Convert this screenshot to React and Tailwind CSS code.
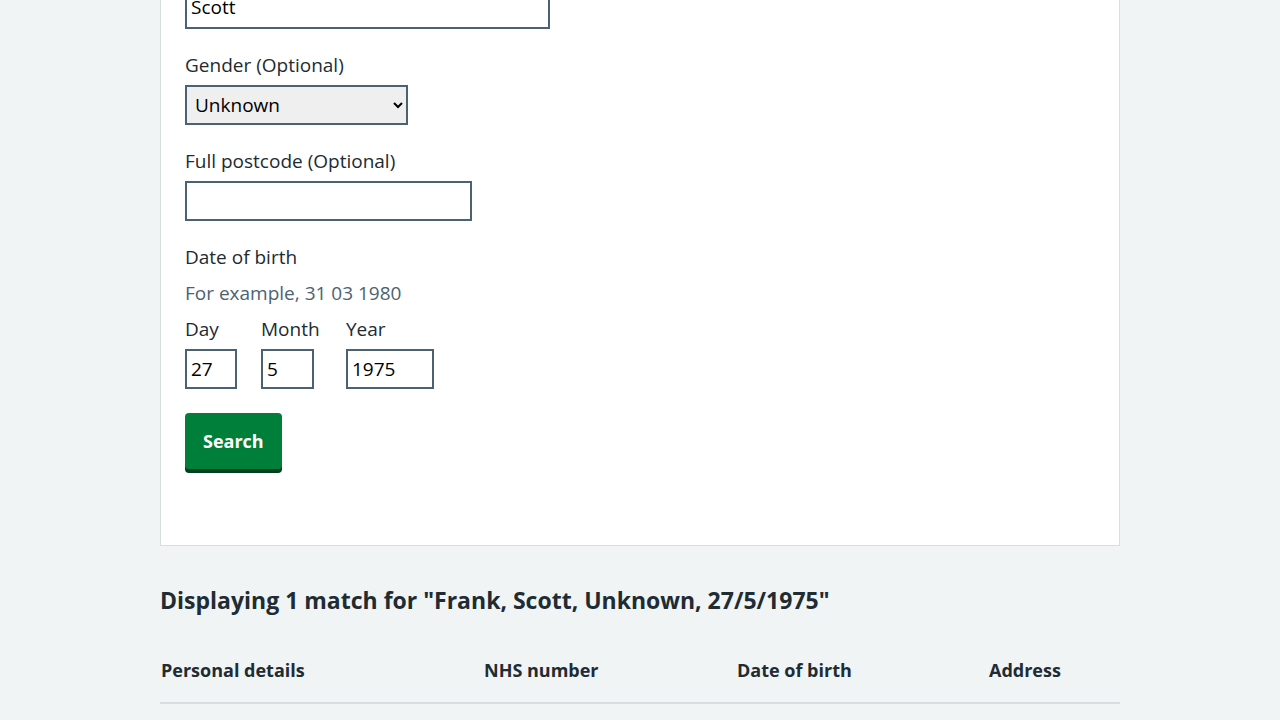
import React from 'react';

const labelCls = 'block text-[19px] leading-7 text-[#212b32]';
const inputCls =
  'block h-10 border-2 border-[#4c6272] bg-white px-1 text-[19px] text-black outline-none';

function DateItem({ label, value, width, minWidth = '' }) {
  return (
    <div className={'mr-6 flex flex-col ' + minWidth}>
      <label className={labelCls + ' mb-1.5'}>{label}</label>
      <input className={inputCls + ' ' + width} defaultValue={value} />
    </div>
  );
}

export default function App() {
  return (
    <div
      className="min-h-[720px] overflow-hidden bg-[#f0f4f5] text-[#212b32]"
      style={{ fontFamily: '"Open Sans", "Noto Sans", sans-serif' }}
    >
      <div className="mx-auto w-[960px]">
        {/* search form card, scrolled so the surname field is cut off at the top */}
        <div className="-mt-[70px] border border-[#d8dde0] bg-white px-6 pt-6 pb-[76px]">
          <div className="mb-[22px]">
            <label className={labelCls + ' mb-1.5'}>Surname</label>
            <input className={inputCls + ' w-[365px] pb-1'} defaultValue="Scott" />
          </div>

          <div className="mb-[22px]">
            <label className={labelCls + ' mb-1.5'}>Gender (Optional)</label>
            <select
              className="block h-10 w-[223px] border-2 border-[#4c6272] bg-[#efefef] pl-1 pr-1 text-[19px] text-black outline-none"
              defaultValue="Unknown"
            >
              <option>Unknown</option>
              <option>Male</option>
              <option>Female</option>
            </select>
          </div>

          <div className="mb-[22px]">
            <label className={labelCls + ' mb-1.5'}>Full postcode (Optional)</label>
            <input className={inputCls + ' w-[287px]'} />
          </div>

          <div className="mb-6">
            <div className={labelCls + ' mb-2'}>Date of birth</div>
            <div className="mb-2 text-[19px] leading-7 text-[#4c6272]">For example, 31 03 1980</div>
            <div className="flex">
              <DateItem label="Day" value="27" width="w-[52px]" />
              <DateItem label="Month" value="5" width="w-[53px]" minWidth="min-w-[61px]" />
              <DateItem label="Year" value="1975" width="w-[88px]" />
            </div>
          </div>

          <button className="flex h-14 items-center rounded-[4px] bg-[#007f3b] px-[18px] text-[18px] font-bold text-white shadow-[0_4px_0_#00401e]">
            Search
          </button>
        </div>

        <h2 className="mt-[38px] text-[23px] font-bold leading-8">
          Displaying 1 match for "Frank, Scott, Unknown, 27/5/1975"
        </h2>

        <table className="mt-7 w-full border-collapse text-left">
          <thead>
            <tr className="border-b-2 border-[#d8dde0]">
              <th className="w-[324px] pt-3 pb-[18px] pl-px text-[18px] font-bold leading-7">Personal details</th>
              <th className="w-[253px] pt-3 pb-[18px] text-[18px] font-bold leading-7">NHS number</th>
              <th className="w-[252px] pt-3 pb-[18px] text-[18px] font-bold leading-7">Date of birth</th>
              <th className="pt-3 pb-[18px] text-[18px] font-bold leading-7">Address</th>
            </tr>
          </thead>
        </table>
      </div>
    </div>
  );
}
